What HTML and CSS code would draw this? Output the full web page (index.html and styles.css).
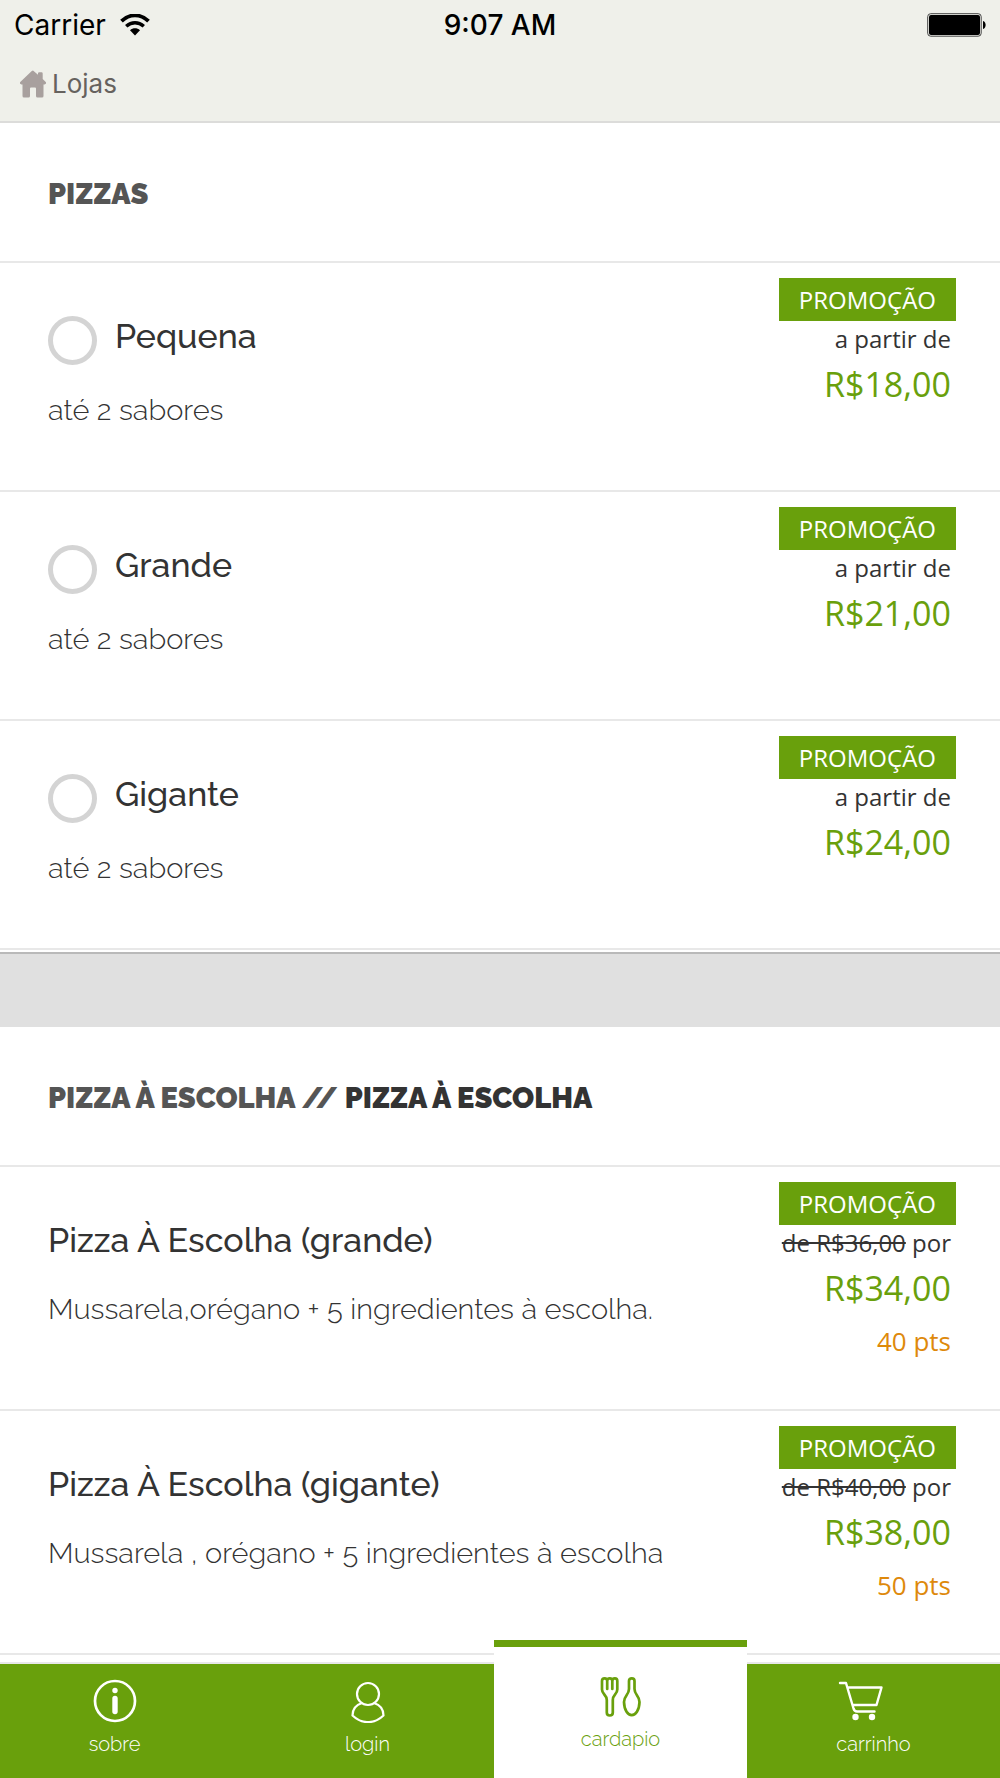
FILE: index.html
```html
<!DOCTYPE html>
<html lang="pt-BR">
<head>
    <meta charset="UTF-8">
    <meta name="viewport" content="width=device-width, initial-scale=1.0">
    <title>Cardapio</title>
    <link rel="stylesheet" href="styles.css">
</head>
<body>
<header class="topbar">
    <div class="status">
        <span class="carrier">Carrier
            <svg class="wifi" width="30" height="22" viewBox="0 0 30 22" aria-hidden="true">
                <path d="M1.500 7.200C9.500-.6 20.500-.6 28.500 7.200" fill="none" stroke="#000" stroke-width="3.800"/>
                <path d="M6.200 12.300C11.500 7.600 18.500 7.600 23.800 12.300" fill="none" stroke="#000" stroke-width="3.500"/>
                <path d="M10 16.200C13 13.600 17 13.600 20 16.200L15 21.500z" fill="#000"/>
            </svg>
        </span>
        <span class="clock">9:07 AM</span>
        <svg class="battery" width="59" height="24" viewBox="0 0 59 24" aria-hidden="true">
            <rect x=".7" y=".7" width="53.500" height="22.500" rx="3" fill="none" stroke="#444" stroke-width="1"/>
            <rect x="2" y="2" width="51" height="20" rx="2" fill="#000"/>
            <path d="M56 8c3.500 1 3.500 7 0 8z" fill="#000"/>
        </svg>
    </div>
    <a href="#lojas" class="back">
        <svg width="28" height="28" viewBox="0 0 28 28" aria-hidden="true">
            <path d="M14 .5 19 4.800V3.500Q19 2.300 20.200 2.300H22.500Q23.700 2.300 23.700 3.500V9L27 12.200Q27.600 14 25.500 14.500H24.500V26Q24.500 27.500 23 27.500H18.500Q17 27.500 17 26V18.500Q17 17.500 16 17.500H12Q11 17.500 11 18.500V26Q11 27.500 9.500 27.500H5Q3.500 27.500 3.500 26V14.500H2.500Q.4 14 1 12.200L12.500 1.300Q13.300.5 14 .5z" fill="#a8a09e"/>
        </svg>
        Lojas
    </a>
</header>

<main>
    <section>
        <h2>Pizzas</h2>
        <ul class="list">
            <li class="item">
                <div class="info">
                    <div class="name">
                        <input type="radio" name="tamanho" id="pequena">
                        <label for="pequena">Pequena</label>
                    </div>
                    <p class="desc">até 2 sabores</p>
                </div>
                <div class="value">
                    <span class="promo">PROMOÇÃO</span>
                    <span class="from">a partir de</span>
                    <span class="price">R$18,00</span>
                </div>
            </li>
            <li class="item">
                <div class="info">
                    <div class="name">
                        <input type="radio" name="tamanho" id="grande">
                        <label for="grande">Grande</label>
                    </div>
                    <p class="desc">até 2 sabores</p>
                </div>
                <div class="value">
                    <span class="promo">PROMOÇÃO</span>
                    <span class="from">a partir de</span>
                    <span class="price">R$21,00</span>
                </div>
            </li>
            <li class="item">
                <div class="info">
                    <div class="name">
                        <input type="radio" name="tamanho" id="gigante">
                        <label for="gigante">Gigante</label>
                    </div>
                    <p class="desc">até 2 sabores</p>
                </div>
                <div class="value">
                    <span class="promo">PROMOÇÃO</span>
                    <span class="from">a partir de</span>
                    <span class="price">R$24,00</span>
                </div>
            </li>
        </ul>
    </section>

    <section class="next">
        <h2>Pizza à escolha // <b>Pizza à escolha</b></h2>
        <ul class="list points">
            <li class="item">
                <div class="info">
                    <h3 class="name">Pizza À Escolha (grande)</h3>
                    <p class="desc">Mussarela,orégano + 5 ingredientes à escolha.</p>
                </div>
                <div class="value">
                    <span class="promo">PROMOÇÃO</span>
                    <span class="from"><s>de R$36,00</s> por</span>
                    <span class="price">R$34,00</span>
                    <span class="pts">40 pts</span>
                </div>
            </li>
            <li class="item">
                <div class="info">
                    <h3 class="name">Pizza À Escolha (gigante)</h3>
                    <p class="desc">Mussarela , orégano + 5 ingredientes à escolha</p>
                </div>
                <div class="value">
                    <span class="promo">PROMOÇÃO</span>
                    <span class="from"><s>de R$40,00</s> por</span>
                    <span class="price">R$38,00</span>
                    <span class="pts">50 pts</span>
                </div>
            </li>
        </ul>
    </section>
</main>

<nav class="tabs">
    <div class="tabs-row">
        <a href="#sobre">
            <svg width="44" height="44" viewBox="0 0 44 44" aria-hidden="true">
                <circle cx="22" cy="22" r="20" fill="none" stroke="currentColor" stroke-width="2.700"/>
                <circle cx="22" cy="11.500" r="2.700" fill="currentColor"/>
                <path d="M22 19.500V32.500" stroke="currentColor" stroke-width="5.400" stroke-linecap="round"/>
            </svg>
            sobre
        </a>
        <a href="#login">
            <svg width="44" height="44" viewBox="0 0 44 44" fill="none" stroke="currentColor" stroke-width="2.200" stroke-linejoin="round" aria-hidden="true">
                <circle cx="22" cy="15" r="11"/>
                <path d="M16 24Q6.500 27 6.500 36.500Q14 43.500 22 43Q30 43.500 37.500 36.500Q37.500 27 28 24"/>
            </svg>
            login
        </a>
        <a href="#cardapio" class="active">
            <svg width="44" height="44" viewBox="0 0 44 44" fill="none" stroke="currentColor" stroke-width="2.700" stroke-linejoin="round" stroke-linecap="round" aria-hidden="true">
                <path d="M8.200 13V5Q8.200 2.300 5.600 2.300Q3 2.300 3 5V13.500C3 18.500 7.800 18.500 7.800 24V36.500Q7.800 39.500 10.800 39.500Q13.800 39.500 13.800 36.500V24C13.800 18.500 18.300 18.500 18.300 13.500V5Q18.300 2.300 15.900 2.300Q13.300 2.300 13.300 5V13M8.200 5Q8.200 2.300 10.800 2.300Q13.300 2.300 13.300 5"/>
                <path d="M30 5Q30 2.300 32.800 2.300Q35.500 2.300 35.500 5V13C35.500 19 40.500 19.500 40.500 26C40 43.500 25.500 43.500 25 26C25 19.500 30 19 30 13z"/>
            </svg>
            cardapio
        </a>
        <a href="#carrinho">
            <svg width="72" height="44" viewBox="0 0 72 44" fill="none" stroke="currentColor" stroke-width="2.400" stroke-linejoin="round" stroke-linecap="round" aria-hidden="true">
                <path d="M2 4H8L15.500 29.500Q16.500 32.500 19 32.500H36.500M9.500 8.500H43.500L38.500 26H14.500"/>
                <circle cx="17.500" cy="38" r="3.200" fill="currentColor" stroke="none"/>
                <circle cx="34" cy="38" r="3.200" fill="currentColor" stroke="none"/>
            </svg>
            carrinho
        </a>
    </div>
</nav>
</body>
</html>
```

FILE: styles.css
```css
* {box-sizing: border-box;}
body {display: flex; flex-direction: column; min-height: 100vh; margin: 0; background: #fff; color: #333; font-family: Raleway, Lato, sans-serif;}
h2, h3, p, ul {margin: 0; padding: 0;}
ul {list-style: none;}
a {text-decoration: none;}

/* top */
.topbar {padding: 8px 14px 0; height: 123px; background: #eff0ea; border-bottom: 2px solid #dcdcda; font-family: Inter, sans-serif;}
.status {display: grid; grid-template-columns: 1fr auto 1fr; align-items: center; height: 34px; color: #000; font-size: 28px;}
.carrier {display: flex; align-items: center; gap: 14px;}
.clock {font-weight: 500;}
.battery {justify-self: end;}
.back {display: inline-flex; align-items: center; gap: 5px; margin-top: 25px; padding-left: 5px; color: #66625e; font-size: 26px; line-height: 34px;}

/* list */
h2 {padding: 52px 48px 48px; border-bottom: 2px solid #e8e8e8; color: #555; font-size: 29px; line-height: 38px; font-weight: 900; text-transform: uppercase;}
h2 b {color: #333; font-weight: 900;}
.next {margin-top: 2px; border-top: 2px solid #b9b9b9;}
.next::before {display: block; content: ''; height: 73px; background: #e0e0e0;}
.item {display: flex; justify-content: space-between; min-height: 229px; padding: 15px 44px 0 48px; border-bottom: 2px solid #e8e8e8;}
.points .item {min-height: 244px;}
.info {padding-top: 34px;}
.name {display: flex; gap: 18px; font-size: 34px; line-height: 48px; font-weight: 500;}
.name input {flex: none; appearance: none; width: 49px; height: 49px; margin: 4px 0 0; border: 5px solid #d4d4d4; border-radius: 50%;}
.name input:checked {background: #69a00c;}
.desc {margin-top: 27px; font-size: 29px; line-height: 36px; font-weight: 300;}
.value {display: flex; flex-direction: column; align-items: flex-end; font-family: "Open Sans", sans-serif;}
.promo {padding: 5px 20px 4px; background: #69a00c; color: #fff; font-size: 24px; line-height: 34px;}
.from {padding-right: 5px; font-size: 24px; line-height: 36px;}
.price {padding: 4px 5px 8px 0; color: #69a00c; font-size: 34px; line-height: 46px;}
.pts {padding-right: 5px; color: #de890b; font-size: 26px; line-height: 44px;}

/* bottom tabs */
.tabs {position: sticky; bottom: 0; margin-top: auto; border-top: 2px solid #e8e8e8; background: #69a00c;}
.tabs-row {display: flex; margin-left: -12px;}
.tabs a {flex: 1; display: flex; flex-direction: column; align-items: center; gap: 7px; height: 114px; padding-top: 15px; color: #fff; font-size: 20px; line-height: 28px; font-weight: 300;}
.tabs .active {gap: 5px; height: 138px; margin-top: -24px; padding-top: 29px; border-top: 7px solid #69a00c; background: #fff; color: #69a00c;}
```
